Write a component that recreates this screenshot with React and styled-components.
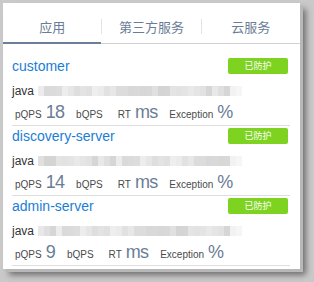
import React from 'react';
import styled, { createGlobalStyle } from 'styled-components';

const Global = createGlobalStyle`
  html, body {
    margin: 0;
    padding: 0;
    background: #c9c9c9;
    font-family: Arial, "Liberation Sans", "Noto Sans CJK SC", sans-serif;
  }
`

const Frame = styled.div`
  width: 314px;
  height: 282px;
  padding: 3px 0 0 3px;
  box-sizing: border-box;
  overflow: hidden;
`

const Panel = styled.div`
  width: 297px;
  height: 266px;
  background: #ffffff;
  box-shadow: 3px 3px 0 #b8b8b8, 6px 6px 6px rgba(0, 0, 0, 0.45);
  overflow: hidden;
`

const Tabs = styled.div`
  display: flex;
  align-items: center;
  border-bottom: 1px solid #d2d2d2;
`

const Tab = styled.div`
  flex: 1;
  text-align: center;
  font-size: 13px;
  line-height: 16px;
  padding: 17px 0 6px;
  color: #6b7d96;
  border-bottom: 2px solid ${p => (p.active ? '#6b7f99' : 'transparent')};
  margin-bottom: -1px;
`

const Divider = styled.div`
  width: 1px;
  height: 15px;
  background: #e3e3e3;
  margin-top: 6px;
`

const List = styled.div`
  padding: 12px 10px 0 9px;
`

const Card = styled.div`
  border-bottom: 1px solid #dedede;
  padding-bottom: 3px;
`

const Head = styled.div`
  display: flex;
  align-items: center;
  justify-content: space-between;
  height: 20px;
`

const Name = styled.a`
  color: #1a7ed6;
  font-size: 14px;
  text-decoration: none;
`

const Badge = styled.span`
  width: 60px;
  height: 16px;
  margin-right: 2px;
  border-radius: 2px;
  background: #7ed321;
  color: #ffffff;
  font-size: 9px;
  line-height: 16px;
  text-align: center;
`

const Lang = styled.div`
  display: flex;
  align-items: center;
  margin-top: 6px;
  height: 18px;
  font-size: 12px;
  color: #333333;
`

const Blur = styled.div`
  display: flex;
  margin-left: 4px;
  height: 10px;
`

const Px = styled.span`
  width: 6px;
  height: 10px;
`

const Metrics = styled.div`
  display: flex;
  align-items: baseline;
  margin-top: 2px;
  height: 20px;
  padding-left: 3px;
`

const Label = styled.span`
  font-size: 10px;
  color: #4a4a4a;
  margin-right: 4px;
`

const Value = styled.span`
  font-size: 18px;
  letter-spacing: -0.8px;
  color: #6b7d96;
  margin-right: ${p => (p.empty ? 11 : 12)}px;
`

const shades = [
  '#ececec', '#e2e2e2', '#dcdcdc', '#e6e6e6', '#d6d6d6', '#e0e0e0', '#ebebeb', '#dadada',
  '#e4e4e4', '#d8d8d8', '#dedede', '#e8e8e8', '#d4d4d4', '#e1e1e1', '#dbdbdb', '#e9e9e9',
  '#d9d9d9', '#e3e3e3', '#dfdfdf', '#d5d5d5', '#e7e7e7', '#dddddd', '#e5e5e5', '#d7d7d7',
  '#e0e0e0', '#d6d6d6', '#e4e4e4', '#dcdcdc', '#ededed', '#e2e2e2', '#d8d8d8', '#eeeeee',
  '#f2f2f2', '#f6f6f6',
]

const services = [
  { name: 'customer', pqps: '18', seed: 0 },
  { name: 'discovery-server', pqps: '14', seed: 5 },
  { name: 'admin-server', pqps: '9', seed: 11 },
]

const Blurred = ({ seed }) => (
  <Blur>
    {shades.map((c, i) => (
      <Px
        key={i}
        style={{ background: i >= shades.length - 2 ? c : shades[(i * 7 + seed) % (shades.length - 2)] }}
      />
    ))}
  </Blur>
)

export default function App() {
  return (
    <Frame>
      <Global />
      <Panel>
        <Tabs>
          <Tab active>应用</Tab>
          <Divider />
          <Tab>第三方服务</Tab>
          <Divider />
          <Tab>云服务</Tab>
        </Tabs>
        <List>
          {services.map(s => (
            <Card key={s.name}>
              <Head>
                <Name href="#">{s.name}</Name>
                <Badge>已防护</Badge>
              </Head>
              <Lang>
                java
                <Blurred seed={s.seed} />
              </Lang>
              <Metrics>
                <Label>pQPS</Label>
                <Value>{s.pqps}</Value>
                <Label>bQPS</Label>
                <Value empty />
                <Label>RT</Label>
                <Value>ms</Value>
                <Label>Exception</Label>
                <Value>%</Value>
              </Metrics>
            </Card>
          ))}
        </List>
      </Panel>
    </Frame>
  );
}
